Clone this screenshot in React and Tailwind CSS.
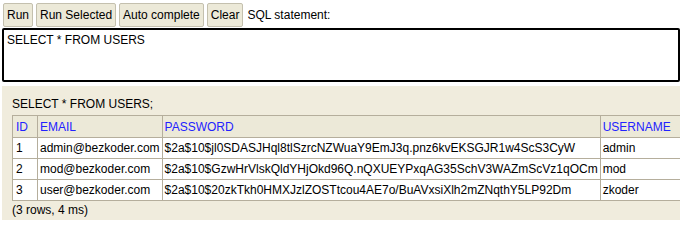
const rows = [
  { id: 1, email: 'admin@bezkoder.com', password: '$2a$10$jl0SDASJHql8tlSzrcNZWuaY9EmJ3q.pnz6kvEKSGJR1w4ScS3CyW', username: 'admin' },
  { id: 2, email: 'mod@bezkoder.com', password: '$2a$10$GzwHrVlskQldYHjOkd96Q.nQXUEYPxqAG35SchV3WAZmScVz1qOCm', username: 'mod' },
  { id: 3, email: 'user@bezkoder.com', password: '$2a$10$20zkTkh0HMXJzlZOSTtcou4AE7o/BuAVxsiXlh2mZNqthY5LP92Dm', username: 'zkoder' },
]

function Btn({ children }) {
  return (
    <button
      type="button"
      className="h-[24px] rounded-[2px] border border-[#c4c0ae] bg-[#ece9d8] px-[3px] text-[12px] leading-none text-black"
    >
      {children}
    </button>
  )
}

export default function App() {
  return (
    <div className="h-[220px] w-[680px] overflow-hidden bg-white font-['Liberation_Sans',Arial,sans-serif] text-[12px] text-black">
      <div className="flex items-center gap-[3px] px-[3px] pt-[3px]">
        <Btn>Run</Btn>
        <Btn>Run Selected</Btn>
        <Btn>Auto complete</Btn>
        <Btn>Clear</Btn>
        <span className="ml-[1px]">SQL statement:</span>
      </div>
      <div className="ml-[2px] mt-[1px] h-[54px] rounded-[2px] border-2 border-black px-[3px] pt-[3px] leading-[14px]">
        SELECT * FROM USERS
      </div>
      <div className="ml-[2px] mt-[4px] h-[140px] bg-[#f0ecdd] px-[10px] pt-[11px]">
        <div className="mb-[4px] leading-[14px]">SELECT * FROM USERS;</div>
        <table className="border-collapse border border-[#b5ae9c] leading-[14px]">
          <thead>
            <tr className="bg-[#ece9d8] text-[#2222ff]">
              <th className="h-[22px] border border-[#b5ae9c] pl-[3px] pr-[9px] text-left font-normal">ID</th>
              <th className="border border-[#b5ae9c] px-[2px] text-left font-normal">EMAIL</th>
              <th className="border border-[#b5ae9c] px-[2px] text-left font-normal">PASSWORD</th>
              <th className="border border-[#b5ae9c] pl-[2px] pr-[10px] text-left font-normal">USERNAME</th>
            </tr>
          </thead>
          <tbody className="bg-white">
            {rows.map((r) => (
              <tr key={r.id}>
                <td className="h-[21px] border border-[#b5ae9c] pl-[3px] pr-[4px]">{r.id}</td>
                <td className="border border-[#b5ae9c] px-[2px]">{r.email}</td>
                <td className="border border-[#b5ae9c] px-[2px]">{r.password}</td>
                <td className="border border-[#b5ae9c] pl-[2px] pr-[10px]">{r.username}</td>
              </tr>
            ))}
          </tbody>
        </table>
        <div className="mt-[2px] leading-[14px]">(3 rows, 4 ms)</div>
      </div>
    </div>
  )
}
